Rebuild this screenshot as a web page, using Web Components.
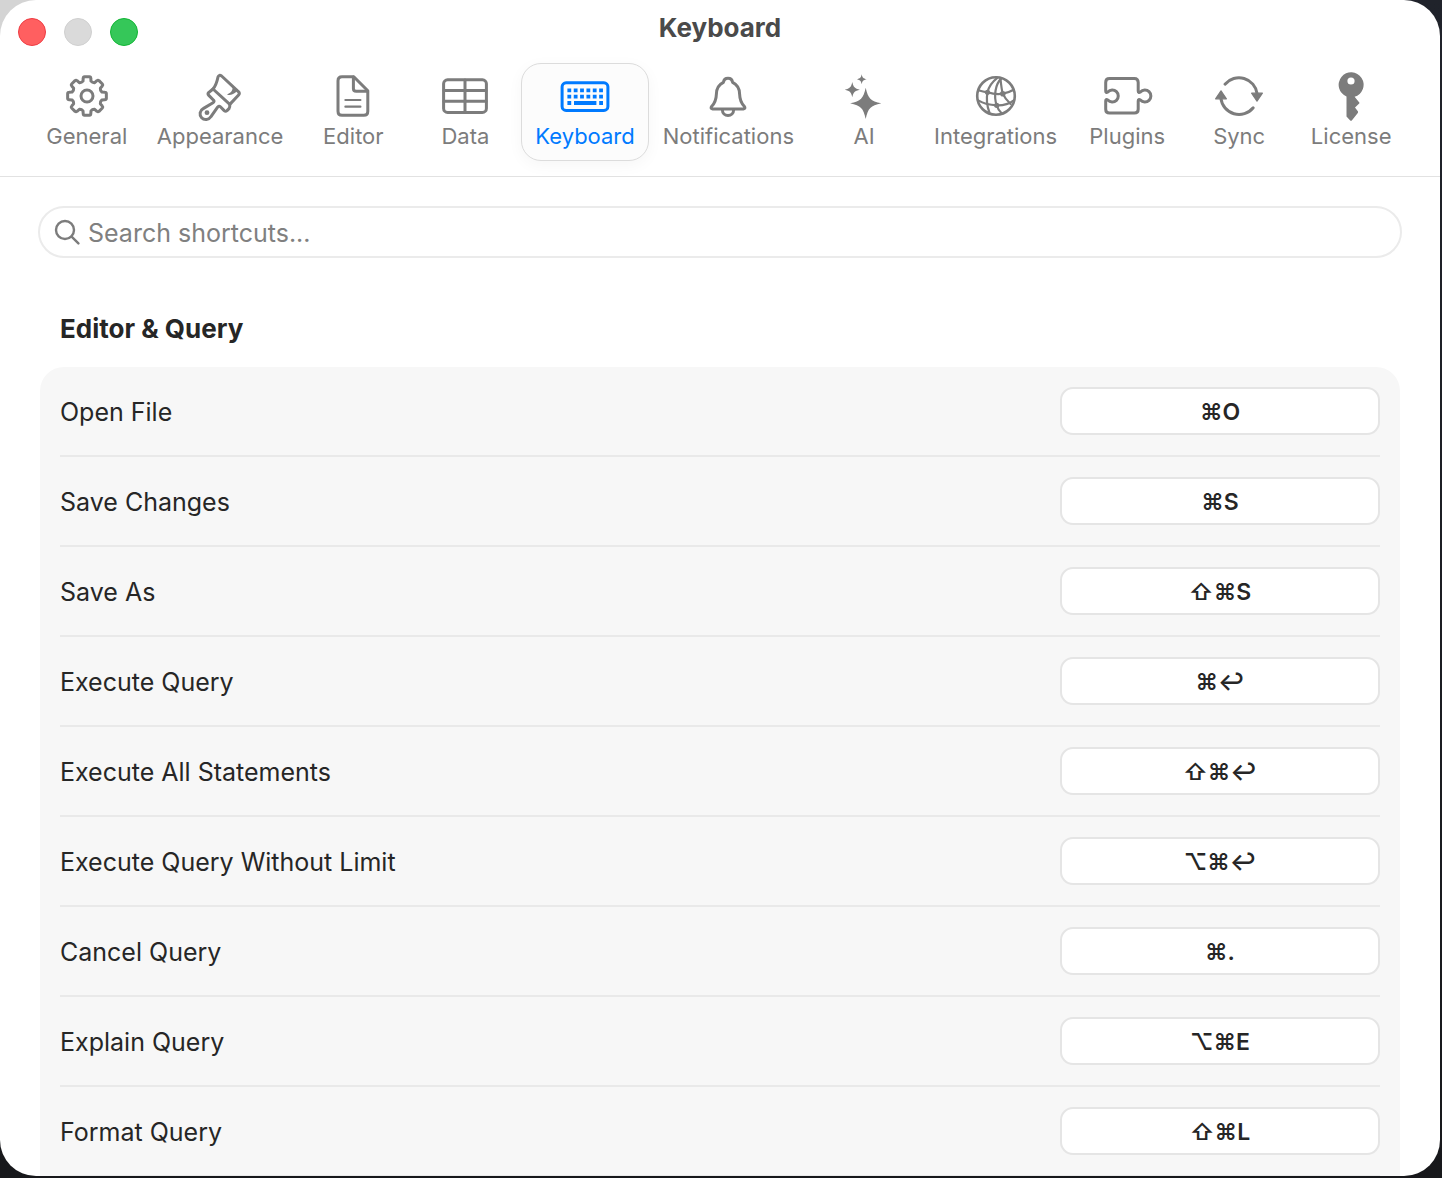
<!DOCTYPE html>
<html lang="en">
<head>
<meta charset="utf-8">
<meta name="viewport" content="width=device-width, initial-scale=1">
<title>Keyboard</title>
<style>
    html {
        min-height: 100%;
        background: linear-gradient(#d4d4d4, #d4d4d4) 0 0 / 60px 60px no-repeat, linear-gradient(#20232b, #17181b);
    }
    body {
        margin: 0;
        font-family: Inter, "Liberation Sans", sans-serif;
    }
</style>
</head>
<body>
<settings-window></settings-window>

<script>
//#region ICONS
// all icons are drawn around 0,0
function gearPath() {
    const point = (r, deg) => {
        const a = deg * Math.PI / 180
        return (r * Math.cos(a)).toFixed(2) + " " + (r * Math.sin(a)).toFixed(2)
    }
    let d = ""
    for (let t = 0; t < 360; t += 45) {
        d += (t ? "L" : "M") + point(15.4, t - 15)
        d += "L" + point(18.2, t - 12) + "Q" + point(19.6, t - 11) + " " + point(19.5, t - 7)
        d += "L" + point(19.5, t + 7) + "Q" + point(19.6, t + 11) + " " + point(18.2, t + 12)
        d += "L" + point(15.4, t + 15) + "Q" + point(14.2, t + 22.5) + " " + point(15.4, t + 30)
    }
    return d + "Z"
}

function star(x, y, r) {
    const k = r * 0.16
    const m = r * 0.3
    return `M${x} ${y - r}C${x + k} ${y - m} ${x + m} ${y - k} ${x + r} ${y}C${x + m} ${y + k} ${x + k} ${y + m} ${x} ${y + r}C${x - k} ${y + m} ${x - m} ${y + k} ${x - r} ${y}C${x - m} ${y - k} ${x - k} ${y - m} ${x} ${y - r}Z`
}

const icons = {
    general: `<path d="${gearPath()}"/><circle r="6"/>`,
    appearance: `
        <path d="M-7 -7C-4 -10.5 -3 -14 -2 -19Q-1 -21.8 1.6 -20L18.6 -4.2Q20 -2.5 18.6 -1L9.8 8.4Z"/>
        <path d="M-7 -7L-11.4 -3.4Q-12.6 -2 -11.2 -0.6L-6.4 4.2Q-5.4 5.6 -7 6.8L-16.8 12.6A5.8 5.8 0 1 0 -9.2 20.8L-2.4 11.2Q-1 9.4 0.4 10.8L4.2 14.6Q5.6 15.8 7 14.6L9 12.6Q10 11 9.8 8.4"/>
        <circle class="fill" cx="-13" cy="16.7" r="2.4"/>
        <path class="fill" d="M12.4 -10C13.4 -6 11 -3 7 -1.6C11 0 15 -2.2 17.4 -5.4Z"/>`,
    editor: `
        <path d="M0.8 -19.3H-11Q-15 -19.3 -15 -15.3V15.3Q-15 19.3 -11 19.3H10.8Q14.8 19.3 14.8 15.3V-5.2Z"/>
        <path d="M0.4 -19V-7.6Q0.4 -4.8 3.2 -4.8H14.4"/>
        <path class="thin" d="M-7.6 4H7.4M-7.6 10.7H7.4"/>`,
    data: `
        <rect x="-21.4" y="-16.2" width="42.8" height="32.6" rx="4"/>
        <path d="M-21 -5.5H21M-21 5.3H21M0 -16V16"/>`,
    keyboard: `
        <rect x="-22.9" y="-13.2" width="45.8" height="27.6" rx="4"/>
        <path class="flat" stroke-width="3.8" stroke-dasharray="3.8 2.55" d="M-17.6 -5.7H18.2M-17.6 0.7H18.2"/>
        <path class="flat" stroke-width="3.8" d="M-17.6 7H-13.8M-11 7H11.4M14.2 7H18"/>`,
    notifications: `
        <path d="M0 -17.8C-2.8 -17.8 -4.2 -16.4 -4.6 -13.6C-10 -11 -11.5 -6.4 -11.6 -2C-11.8 4.4 -13 7 -16.2 10.2Q-18 12.8 -15.4 13H15.4Q18 12.8 16.2 10.2C13 7 11.8 4.4 11.6 -2C11.5 -6.4 10 -11 4.6 -13.6C4.2 -16.4 2.8 -17.8 0 -17.8Z"/>
        <path d="M-5.6 14A5.6 5.6 0 0 0 5.6 14"/>`,
    ai: `<path class="fill" d="${star(1.7, 7.3, 15.6)}${star(-11.7, -6.3, 7.6)}${star(-2.3, -16.7, 5)}"/>`,
    integrations: `
        <circle r="18.8" stroke-width="2.6"/>
        <path class="thin" d="M1.6 -18.4C-4 -14 -7.4 -9 -8.5 -3.7C-10 4 -9.4 9 -6.6 16.4"/>
        <path class="thin" d="M5.4 -17.6C-0.6 -12 -2.6 0 0.7 9.3Q2 14 5.6 17.2"/>
        <path class="thin" d="M4.4 -18C5 -12 5.6 -6 6.8 -2.3Q9 3 14.6 8"/>
        <path class="thin" d="M-17.6 -5.8Q-13 -4.2 -8.5 -3.7Q0 -1 6.8 -2.3Q13 -3.4 17.6 -6.2"/>
        <path class="thin" d="M-17.8 4.4Q-10 9 0.7 9.3Q11 9.6 17.4 4.6"/>
        <circle class="fill" cx="-8.5" cy="-3.7" r="2.6"/>
        <circle class="fill" cx="6.8" cy="-2.3" r="2.8"/>
        <circle class="fill" cx="0.7" cy="9.3" r="2.6"/>`,
    plugins: `<path d="M-21.3 -5V-13.6Q-21.3 -17.4 -17.5 -17.4H7.4Q11.2 -17.4 11.2 -13.6V-5Q11.2 -2.6 13.4 -4A6 6 0 1 1 13.4 4Q11.2 2.6 11.2 5V13.2Q11.2 17 7.4 17H-17.5Q-21.3 17 -21.3 13.2V5Q-21.3 2.6 -19.2 4A6 6 0 1 0 -19.2 -4Q-21.3 -2.6 -21.3 -5Z"/>`,
    sync: `
        <path d="M-14 -11.8A18.3 18.3 0 0 1 18.1 -2.4M14.2 11.8A18.3 18.3 0 0 1 -18.1 2.4"/>
        <path class="arrows" d="M12.6 -2.8H23.4L18 5.2ZM-12.6 2.8H-23.4L-18 -5.2Z"/>`,
    license: `<path class="fill" fill-rule="evenodd" d="M-4.5 0.4A12.5 12.5 0 1 1 3.6 0.8L8.3 6.4Q8.6 7 8.2 7.4L4 11.6L7 15.6Q7.2 16.4 6.8 17L0.8 24.4Q0 25.2 -0.8 24.4L-4.5 20.6ZM0 -18.6A3.6 3.6 0 1 0 0 -11.4A3.6 3.6 0 1 0 0 -18.6Z"/>`
}
//#endregion ICONS

const iconTemplate = document.createElement("template")
iconTemplate.innerHTML = /*html*/`
    <style>
    :host {
        display: block;
        width: 56px;
        height: 56px;
    }
    svg {
        display: block;
        fill: none;
        stroke: currentColor;
        stroke-linecap: round;
        stroke-linejoin: round;
    }
    .fill {
        fill: currentColor;
        stroke: none;
    }
    .arrows {
        fill: currentColor;
        stroke-width: 1.2;
    }
    .thin {
        stroke-width: 2.2;
    }
    .flat {
        stroke-linecap: butt;
    }
    </style>
    <svg viewBox="-28 -28 56 56" width="56" height="56" stroke-width="3" aria-hidden="true"></svg>
`

class settingsIcon extends HTMLElement
{
    constructor(){
        super()
        const shadow = this.attachShadow({mode: "open"})
        shadow.append(iconTemplate.content.cloneNode(true))
    }
    connectedCallback() {
        this.shadowRoot.querySelector("svg").innerHTML = icons[this.getAttribute("name")]
    }
}

customElements.define('settings-icon', settingsIcon)

const tabTemplate = document.createElement("template")
tabTemplate.innerHTML = /*html*/`
    <style>
    :host {
        display: block;
    }
    button {
        display: flex;
        flex-direction: column;
        align-items: center;
        box-sizing: border-box;
        min-width: 112px;
        height: 98px;
        padding: 4px 13px 0;
        border: 1px solid transparent;
        border-radius: 20px;
        background: none;
        color: #7c7c7c;
        font: inherit;
        font-size: 22px;
        line-height: 24px;
    }
    :host([selected]) button {
        border-color: #dcdcdc;
        background: #fcfcfc;
        box-shadow: 0 4px 16px rgba(0, 0, 0, 0.04);
        color: #007aff;
    }
    </style>
    <button type="button">
        <settings-icon></settings-icon>
        <slot></slot>
    </button>
`

class settingsTab extends HTMLElement
{
    constructor(){
        super()
        const shadow = this.attachShadow({mode: "open"})
        shadow.append(tabTemplate.content.cloneNode(true))
        shadow.querySelector("settings-icon").setAttribute("name", this.getAttribute("icon"))
    }
}

customElements.define('settings-tab', settingsTab)

const searchTemplate = document.createElement("template")
searchTemplate.innerHTML = /*html*/`
    <style>
    :host {
        display: block;
    }
    label {
        display: flex;
        align-items: center;
        gap: 8px;
        box-sizing: border-box;
        height: 52px;
        padding: 0 14px;
        border: 2px solid #ebebeb;
        border-radius: 26px;
        background: white;
    }
    svg {
        flex: none;
        fill: none;
        stroke: #7c7c7c;
        stroke-width: 2.4;
        stroke-linecap: round;
    }
    input {
        flex: 1;
        min-width: 0;
        padding: 2px 0 0;
        border: 0;
        outline: 0;
        background: none;
        color: #262626;
        font: inherit;
        font-size: 25px;
        line-height: 32px;
    }
    input::placeholder {
        color: #808080;
        opacity: 1;
    }
    </style>
    <label>
        <svg width="26" height="28" viewBox="0 0 26 28" aria-hidden="true"><circle cx="11" cy="12" r="9"/><path d="M17.6 18.6L24.4 25.4"/></svg>
        <input type="text" aria-label="Search shortcuts" placeholder="Search shortcuts...">
    </label>
`

class shortcutSearch extends HTMLElement
{
    constructor(){
        super()
        const shadow = this.attachShadow({mode: "open"})
        shadow.append(searchTemplate.content.cloneNode(true))
    }
}

customElements.define('shortcut-search', shortcutSearch)

const rowTemplate = document.createElement("template")
rowTemplate.innerHTML = /*html*/`
    <style>
    :host {
        display: flex;
        align-items: center;
        justify-content: space-between;
        box-sizing: border-box;
        height: 90px;
        border-bottom: 2px solid #e9e9e9;
        color: #262626;
        font-size: 25px;
        line-height: 32px;
    }
    #name {
        padding-top: 2px;
    }
    button {
        box-sizing: border-box;
        width: 320px;
        height: 48px;
        padding: 2px 0 0;
        border: 2px solid #e5e5e5;
        border-radius: 13px;
        background: white;
        color: inherit;
        font: inherit;
        font-size: 23px;
        font-weight: 600;
    }
    </style>
    <span id="name"><slot></slot></span>
    <button type="button" id="keys" aria-labelledby="name keys"></button>
`

class shortcutRow extends HTMLElement
{
    constructor(){
        super()
        const shadow = this.attachShadow({mode: "open"})
        shadow.append(rowTemplate.content.cloneNode(true))
        shadow.getElementById("keys").textContent = this.getAttribute("keys")
    }
}

customElements.define('shortcut-row', shortcutRow)

const groupTemplate = document.createElement("template")
groupTemplate.innerHTML = /*html*/`
    <style>
    :host {
        display: block;
    }
    h2 {
        margin: 0 0 22px 22px;
        color: #262626;
        font-size: 26px;
        font-weight: 700;
        line-height: 32px;
    }
    #panel {
        margin: 0 2px;
        padding: 0 20px 24px;
        border-radius: 24px;
        background: #f7f7f7;
    }
    </style>
    <h2><slot name="title"></slot></h2>
    <div id="panel"><slot></slot></div>
`

class shortcutGroup extends HTMLElement
{
    constructor(){
        super()
        const shadow = this.attachShadow({mode: "open"})
        shadow.append(groupTemplate.content.cloneNode(true))
    }
}

customElements.define('shortcut-group', shortcutGroup)

const windowTemplate = document.createElement("template")
windowTemplate.innerHTML = /*html*/`
    <style>
    :host {
        display: flex;
        flex-direction: column;
        height: calc(100vh - 2px);
        margin-right: 2px;
        overflow: hidden;
        border-radius: 36px;
        background: white;
    }
    header {
        flex: none;
        border-bottom: 1px solid #e2e2e2;
    }
    #titleBar {
        display: grid;
        grid-template-columns: 1fr auto 1fr;
        height: 63px;
        padding: 0 18px;
    }
    #lights {
        display: flex;
        gap: 18px;
        padding-top: 18px;
    }
    #lights button {
        box-sizing: border-box;
        width: 28px;
        height: 28px;
        padding: 0;
        border: 1px solid #cfcfcf;
        border-radius: 50%;
        background: #dadada;
    }
    #lights .close {
        border-color: #ee3c43;
        background: #ff5f60;
    }
    #lights .zoom {
        border-color: #12b535;
        background: #35c759;
    }
    h1 {
        margin: 12px 0 0;
        color: #4a4a4a;
        font-size: 26px;
        font-weight: 700;
        line-height: 32px;
    }
    nav {
        display: flex;
        justify-content: center;
        padding: 0 2px 15px 0;
    }
    main {
        flex: 1;
        min-height: 0;
        padding: 29px 38px 0;
        overflow-y: auto;
        scrollbar-width: none;
    }
    shortcut-search {
        margin-bottom: 55px;
    }
    </style>
    <header>
        <div id="titleBar">
            <div id="lights">
                <button type="button" class="close" aria-label="Close"></button>
                <button type="button" aria-label="Minimize" disabled></button>
                <button type="button" class="zoom" aria-label="Zoom"></button>
            </div>
            <h1>Keyboard</h1>
        </div>
        <nav>
            <settings-tab icon="general">General</settings-tab>
            <settings-tab icon="appearance">Appearance</settings-tab>
            <settings-tab icon="editor">Editor</settings-tab>
            <settings-tab icon="data">Data</settings-tab>
            <settings-tab icon="keyboard" selected>Keyboard</settings-tab>
            <settings-tab icon="notifications">Notifications</settings-tab>
            <settings-tab icon="ai">AI</settings-tab>
            <settings-tab icon="integrations">Integrations</settings-tab>
            <settings-tab icon="plugins">Plugins</settings-tab>
            <settings-tab icon="sync">Sync</settings-tab>
            <settings-tab icon="license">License</settings-tab>
        </nav>
    </header>
    <main>
        <shortcut-search></shortcut-search>
        <shortcut-group>
            <span slot="title">Editor &amp; Query</span>
            <shortcut-row keys="⌘O">Open File</shortcut-row>
            <shortcut-row keys="⌘S">Save Changes</shortcut-row>
            <shortcut-row keys="⇧⌘S">Save As</shortcut-row>
            <shortcut-row keys="⌘↩">Execute Query</shortcut-row>
            <shortcut-row keys="⇧⌘↩">Execute All Statements</shortcut-row>
            <shortcut-row keys="⌥⌘↩">Execute Query Without Limit</shortcut-row>
            <shortcut-row keys="⌘.">Cancel Query</shortcut-row>
            <shortcut-row keys="⌥⌘E">Explain Query</shortcut-row>
            <shortcut-row keys="⇧⌘L">Format Query</shortcut-row>
        </shortcut-group>
    </main>
`

class settingsWindow extends HTMLElement
{
    constructor(){
        super()
        const shadow = this.attachShadow({mode: "open"})
        // importNode upgrades the nested elements with their attributes already set
        shadow.append(document.importNode(windowTemplate.content, true))
    }
}

customElements.define('settings-window', settingsWindow)
</script>
</body>
</html>
